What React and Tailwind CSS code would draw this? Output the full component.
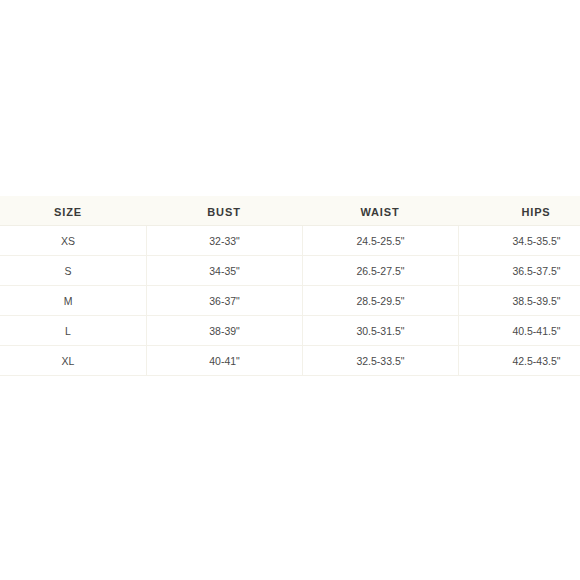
const rows = [
  ['XS', '32-33"', '24.5-25.5"', '34.5-35.5"'],
  ['S', '34-35"', '26.5-27.5"', '36.5-37.5"'],
  ['M', '36-37"', '28.5-29.5"', '38.5-39.5"'],
  ['L', '38-39"', '30.5-31.5"', '40.5-41.5"'],
  ['XL', '40-41"', '32.5-33.5"', '42.5-43.5"'],
]

const headers = ['SIZE', 'BUST', 'WAIST', 'HIPS']

export default function App() {
  return (
    <div className="w-[580px] h-[580px] bg-white overflow-hidden pt-[196px]" style={{ fontFamily: '"Liberation Sans", Arial, sans-serif' }}>
      <div className="ml-[-10px] w-[624px]">
        {/* Header */}
        <div className="grid grid-cols-4 h-[30px] bg-[#fbfaf4] border-b border-[#f1efe6]">
          {headers.map(h => (
            <div key={h} className="flex items-center justify-center pt-[3px] text-[11px] font-bold tracking-[0.08em] text-[#3a3a3a]">
              {h}
            </div>
          ))}
        </div>

        {/* Body */}
        {rows.map(r => (
          <div key={r[0]} className="grid grid-cols-4 h-[30px] border-b border-[#f3f1e9]">
            {r.map((c, i) => (
              <div
                key={i}
                className={`flex items-center justify-center pt-[2px] text-[10.5px] text-[#4a4a4a] ${i > 0 ? 'border-l border-[#f3f1e9]' : ''}`}
              >
                {c}
              </div>
            ))}
          </div>
        ))}
      </div>
    </div>
  )
}
